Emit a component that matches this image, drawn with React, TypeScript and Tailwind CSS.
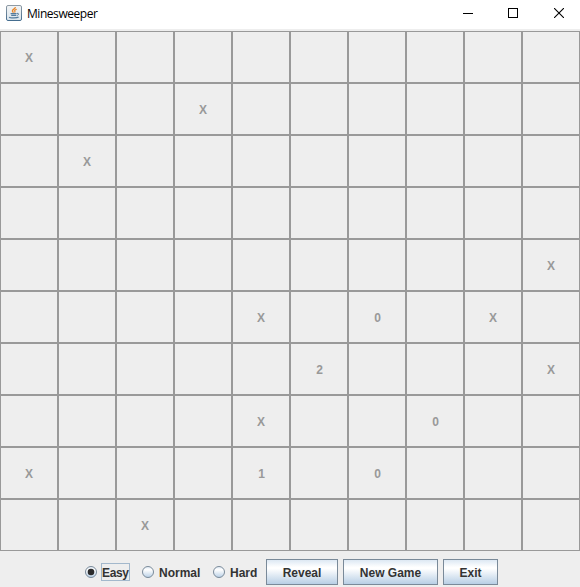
import React from 'react';

const SIZE = 10;

const revealed: Record<string, string> = {
  '0-0': 'X',
  '1-3': 'X',
  '2-1': 'X',
  '4-9': 'X',
  '5-4': 'X',
  '5-6': '0',
  '5-8': 'X',
  '6-5': '2',
  '6-9': 'X',
  '7-4': 'X',
  '7-7': '0',
  '8-0': 'X',
  '8-4': '1',
  '8-6': '0',
  '9-2': 'X',
};

function JavaIcon() {
  return (
    <svg width="16" height="16" viewBox="0 0 16 16" fill="none">
      <defs>
        <linearGradient id="frame" x1="0" y1="0" x2="0" y2="1">
          <stop offset="0" stopColor="#8f9ba5" />
          <stop offset="1" stopColor="#456d8f" />
        </linearGradient>
        <linearGradient id="face" x1="0" y1="0" x2="0" y2="1">
          <stop offset="0" stopColor="#f2f4f5" />
          <stop offset="1" stopColor="#dbe5ec" />
        </linearGradient>
      </defs>
      <rect x="0.5" y="0.5" width="15" height="15" rx="1.5" fill="url(#face)" stroke="url(#frame)" />
      <path d="M9.3 2.2c.4 1.6-3.2 2.2-2.9 3.8.1.7.8 1 1 1.6" stroke="#e8862a" strokeWidth="1.4" />
      <path d="M10.7 4.2c-1.6.6-2.5 1.2-1.9 1.9.4.5.2 1-.3 1.4" stroke="#e8862a" strokeWidth="1.2" />
      <path d="M4.6 8.6h6M5.2 10.3h4.8" stroke="#537b9d" strokeWidth="1.2" />
      <path d="M11 8.4c2.2-.5 2.2 1.6-.4 2.2" stroke="#537b9d" strokeWidth="1" />
      <path d="M3.2 12.1c.6 1 7.8 1.2 9.4 0" stroke="#537b9d" strokeWidth="1.2" />
    </svg>
  );
}

function TitleBar() {
  return (
    <header className="flex h-[29px] items-start bg-white">
      <div className="pl-1.5 pt-[5px]">
        <JavaIcon />
      </div>
      <h1 className="ml-[5px] mt-[5px] font-['Open_Sans','Noto_Sans',sans-serif] text-[12px] font-normal leading-[17px] tracking-[-0.45px] text-black">
        Minesweeper
      </h1>
      <div className="ml-auto mr-4 mt-2 flex">
        <svg className="mr-[35px]" width="10" height="10" shapeRendering="crispEdges">
          <path d="M0 5.5h10" stroke="#000" />
        </svg>
        <svg className="mr-9" width="10" height="10" shapeRendering="crispEdges">
          <rect x="0.5" y="0.5" width="9" height="9" fill="none" stroke="#000" />
        </svg>
        <svg width="10" height="10">
          <path d="M0 0l10 10M10 0L0 10" stroke="#000" strokeWidth="1.1" />
        </svg>
      </div>
    </header>
  );
}

function Radio({ label, checked = false }: { label: string; checked?: boolean }) {
  return (
    <label className="flex items-center">
      <svg width="12" height="12" viewBox="0 0 12 12">
        <defs>
          <linearGradient id={`radio-${label}`} x1="0" y1="0" x2="0" y2="1">
            <stop offset="0" stopColor="#dde8f3" />
            <stop offset="0.3" stopColor="#ffffff" />
            <stop offset="1" stopColor="#b8cfe5" />
          </linearGradient>
        </defs>
        <circle cx="6" cy="6" r="5.5" fill={`url(#radio-${label})`} stroke="#7a8a99" />
        {checked && <circle cx="6" cy="6" r="3.3" fill="#2b2b2b" />}
      </svg>
      <span
        className={`ml-1 flex h-[18px] items-center border pt-px ${checked ? 'w-[29px] border-[#a3b8cc] tracking-[-0.35px]' : 'border-transparent'}`}
      >
        {label}
      </span>
    </label>
  );
}

function Button({ label, width }: { label: string; width: string }) {
  return (
    <button
      className={`h-[26px] border border-[#7a8a99] bg-[linear-gradient(to_bottom,#dde8f3_0%,#ffffff_30%,#ffffff_36%,#b8cfe5_100%)] pt-px ${width}`}
    >
      {label}
    </button>
  );
}

export default function App() {
  return (
    <div className="h-[587px] w-[580px] overflow-hidden bg-[#eeeeee] font-['Liberation_Sans',Arial,sans-serif] text-[12px] font-bold text-[#333333]">
      <TitleBar />
      <main className="mt-0.5 grid grid-cols-10">
        {Array.from({ length: SIZE * SIZE }, (_, i) => {
          const value = revealed[`${Math.floor(i / SIZE)}-${i % SIZE}`];
          return (
            <div
              key={i}
              className={`flex h-[52px] items-center justify-center border border-[#999999] pt-0.5 text-[#999999] ${value && value !== 'X' ? 'pl-px' : ''}`}
            >
              {value}
            </div>
          );
        })}
      </main>
      <footer className="flex h-9 items-start pl-[85px] pt-2">
        <div className="flex h-[26px] items-center">
          <div className="w-[57px]">
            <Radio label="Easy" checked />
          </div>
          <div className="w-[71px]">
            <Radio label="Normal" />
          </div>
          <div className="w-[53px]">
            <Radio label="Hard" />
          </div>
        </div>
        <div className="flex gap-[5px]">
          <Button label="Reveal" width="w-[72px]" />
          <Button label="New Game" width="w-[95px]" />
          <Button label="Exit" width="w-[55px]" />
        </div>
      </footer>
    </div>
  );
}
